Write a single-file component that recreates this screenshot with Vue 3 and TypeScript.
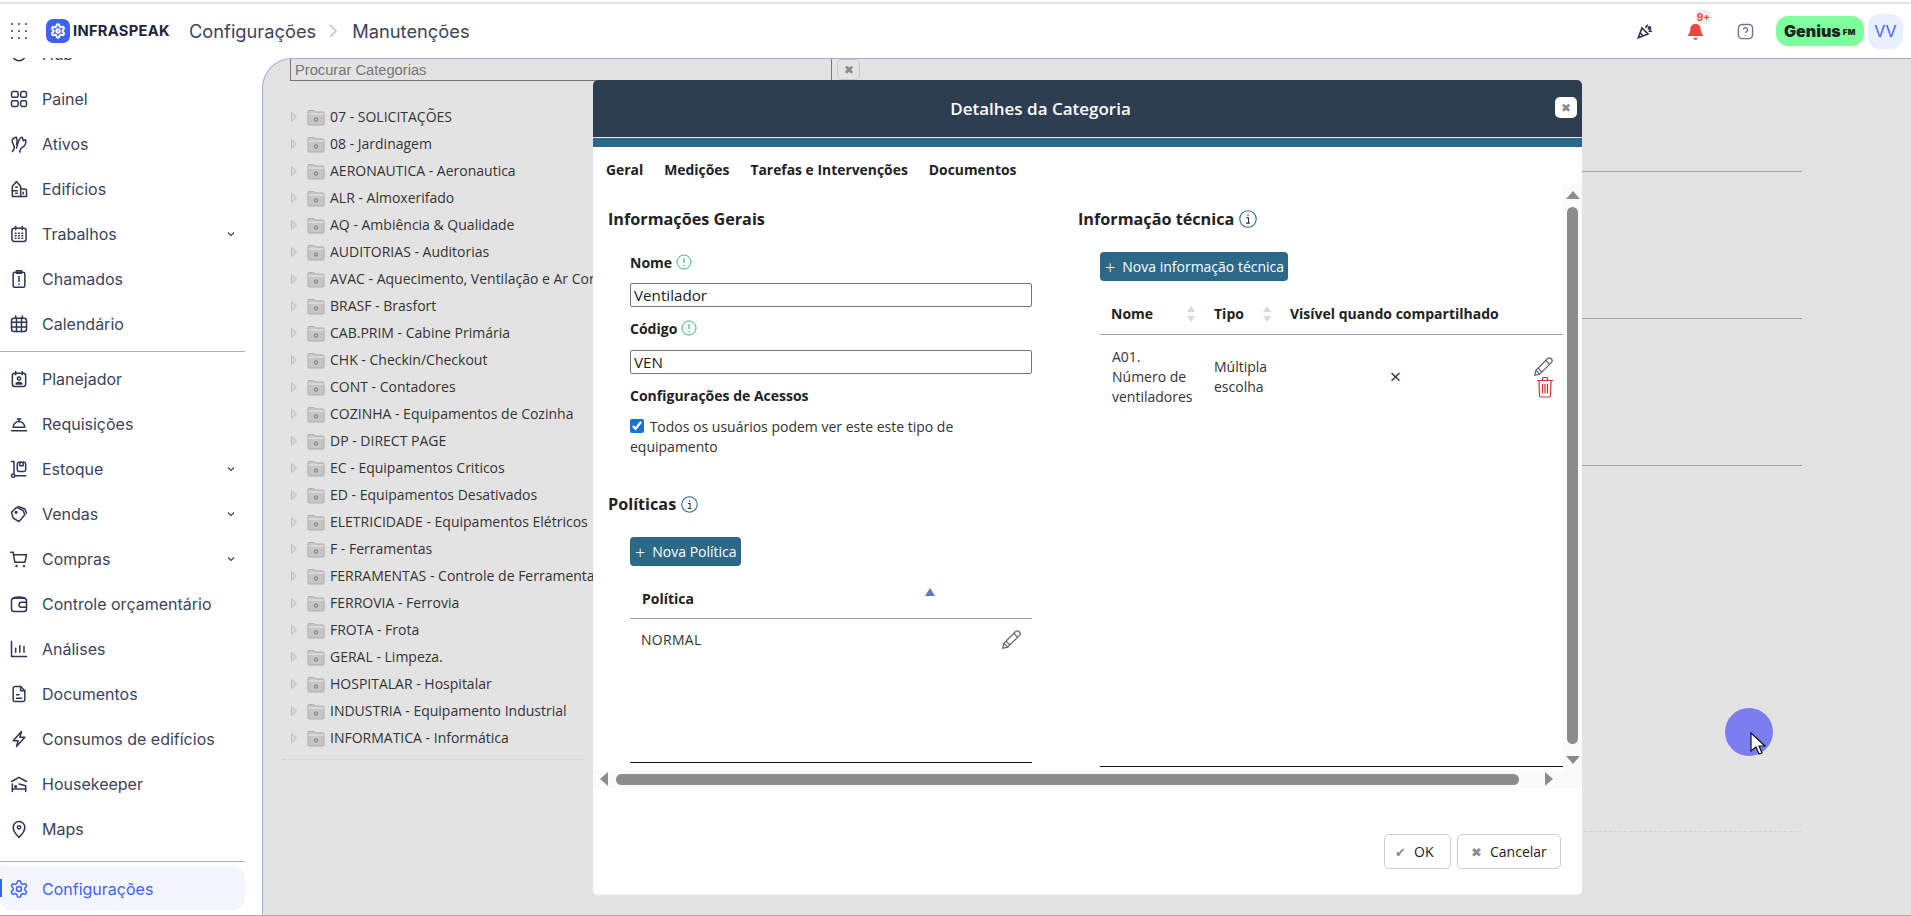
<script setup lang="ts">
const c = (x: number, y: number, r: number) => `M${x - r} ${y}a${r} ${r} 0 1 0 ${2 * r} 0a${r} ${r} 0 1 0 ${-2 * r} 0z`
const r = (x: number, y: number, w: number, h: number, q: number) =>
  `M${x + q} ${y}h${w - 2 * q}a${q} ${q} 0 0 1 ${q} ${q}v${h - 2 * q}a${q} ${q} 0 0 1 ${-q} ${q}h${-(w - 2 * q)}a${q} ${q} 0 0 1 ${-q} ${-q}v${-(h - 2 * q)}a${q} ${q} 0 0 1 ${q} ${-q}z`

interface NavItem { label: string; icon: string[]; caret?: boolean }

const gear = 'M12.22 2h-.44a2 2 0 0 0-2 2v.18a2 2 0 0 1-1 1.73l-.43.25a2 2 0 0 1-2 0l-.15-.08a2 2 0 0 0-2.73.73l-.22.38a2 2 0 0 0 .73 2.73l.15.1a2 2 0 0 1 1 1.72v.51a2 2 0 0 1-1 1.74l-.15.09a2 2 0 0 0-.73 2.73l.22.38a2 2 0 0 0 2.73.73l.15-.08a2 2 0 0 1 2 0l.43.25a2 2 0 0 1 1 1.73V20a2 2 0 0 0 2 2h.44a2 2 0 0 0 2-2v-.18a2 2 0 0 1 1-1.73l.43-.25a2 2 0 0 1 2 0l.15.08a2 2 0 0 0 2.73-.73l.22-.39a2 2 0 0 0-.73-2.73l-.15-.08a2 2 0 0 1-1-1.74v-.5a2 2 0 0 1 1-1.74l.15-.09a2 2 0 0 0 .73-2.73l-.22-.38a2 2 0 0 0-2.73-.73l-.15.08a2 2 0 0 1-2 0l-.43-.25a2 2 0 0 1-1-1.73V4a2 2 0 0 0-2-2z'

const groupA: NavItem[] = [
  { label: 'Hub', icon: [c(12, 12, 8)] },
  { label: 'Painel', icon: [r(3, 3, 8, 7, 2), r(14, 3, 7, 7, 2), r(3, 14, 8, 7, 2), r(14, 14, 7, 7, 2)] },
  { label: 'Ativos', icon: ['M4 21c2-2 3-4 2-7-1-2-3-4-2-7 1-2 3-3 5-3 1 3 1 6 0 9', 'M9 17c1-2 1-4 2-7 1-3 3-6 5-6l1 4 3-1c1 4-1 8-4 9-2 1-3 3-3 6'] },
  { label: 'Edifícios', icon: ['M4 21V9l5-6 5 6v12z', 'M14 12h5a2 2 0 0 1 2 2v7h-7', 'M4 14h6', 'M8 10h2', 'M8 17h2', 'M17 16v2'] },
  { label: 'Trabalhos', icon: [r(3.5, 5, 17, 16, 3), 'M8 3v4', 'M16 3v4', 'M7.5 11h1', 'M11.5 11h1', 'M15.5 11h1', 'M7.5 14h1', 'M11.5 14h1', 'M15.5 14h1', 'M7.5 17h1', 'M11.5 17h1', 'M15.5 17h1'], caret: true },
  { label: 'Chamados', icon: [r(5, 4, 14, 18, 2), 'M9 2h6v3H9z', 'M12 9v6', 'M12 18v.5'] },
  { label: 'Calendário', icon: [r(3, 5, 18, 16, 3), 'M3 10h18', 'M3 15.5h18', 'M9 5v16', 'M15 5v16', 'M8 2.5V5', 'M16 2.5V5'] },
]
const groupB: NavItem[] = [
  { label: 'Planejador', icon: [r(4, 5, 16, 16, 3), 'M8 3v4', 'M16 3v4', c(12, 11.5, 2), 'M8.5 18c.5-2.4 6.500-2.400 7 0z'] },
  { label: 'Requisições', icon: ['M5 16a7 7 0 0 1 14 0z', 'M12 9V6', 'M10 6h4', 'M3 20h18'] },
  { label: 'Estoque', icon: ['M3 3h3v14', c(5, 20, 2), 'M8 20h12', r(10, 4, 10, 11, 2), 'M13 4v4h4V4'], caret: true },
  { label: 'Vendas', icon: ['M3 10l6-6 8 4 2 5-7 8-7-4z', c(8.5, 10, 1), 'M11 3l8 3 2 5'], caret: true },
  { label: 'Compras', icon: ['M2 4h3l2 12h12l2-9H6', c(9, 20.500, .6), c(18, 20.500, .6)], caret: true },
  { label: 'Controle orçamentário', icon: [r(3, 5, 18, 16, 3), 'M5 5c1-2 11-2 14 0', 'M21 10h-6a3 3 0 0 0 0 6h6'] },
  { label: 'Análises', icon: ['M3 3v18h18', 'M8 16v-5', 'M13 16V8', 'M18 16V9'] },
  { label: 'Documentos', icon: ['M5 5a2 2 0 0 1 2-2h7l5 5v11a2 2 0 0 1-2 2H7a2 2 0 0 1-2-2z', 'M14 3v5h5', 'M9 13h3', 'M9 17h6'] },
  { label: 'Consumos de edifícios', icon: ['M15 3L5 14h6l-2 7 10-11h-6z'] },
  { label: 'Housekeeper', icon: ['M3 9l9-5 9 5', 'M4 21v-9', 'M4 18h16v3', 'M20 18v-4l-8-2', c(8, 15, 1)] },
  { label: 'Maps', icon: ['M12 22s7-6.500 7-12a7 7 0 0 0-14 0c0 5.500 7 12 7 12z', c(12, 10, 2)] },
]

const categories = [
  '07 - SOLICITAÇÕES', '08 - Jardinagem', 'AERONAUTICA - Aeronautica', 'ALR - Almoxerifado',
  'AQ - Ambiência & Qualidade', 'AUDITORIAS - Auditorias', 'AVAC - Aquecimento, Ventilação e Ar Condicionado',
  'BRASF - Brasfort', 'CAB.PRIM - Cabine Primária', 'CHK - Checkin/Checkout', 'CONT - Contadores',
  'COZINHA - Equipamentos de Cozinha', 'DP - DIRECT PAGE', 'EC - Equipamentos Criticos',
  'ED - Equipamentos Desativados', 'ELETRICIDADE - Equipamentos Elétricos', 'F - Ferramentas',
  'FERRAMENTAS - Controle de Ferramentas', 'FERROVIA - Ferrovia', 'FROTA - Frota', 'GERAL - Limpeza.',
  'HOSPITALAR - Hospitalar', 'INDUSTRIA - Equipamento Industrial', 'INFORMATICA - Informática',
]
const tabs = ['Geral', 'Medições', 'Tarefas e Intervenções', 'Documentos']
const pencil = ['M2.500 17.500L3.500 13 14 2.500c1-1 2.500-1 3.500 0s1 2.500 0 3.500L7 16.500z', 'M3.500 13L7 16.500', 'M12.500 4L16 7.500', 'M5.500 11L9 14.500']
</script>

<template>
  <div class="app">
    <div class="strip"></div>
    <header class="top">
      <svg class="dots" viewBox="0 0 16 16" width="16" height="16">
        <g fill="#3a4160">
          <circle v-for="p in [1,8,15].flatMap(x => [1,8,15].map(y => [x,y]))" :key="p.join()" :cx="p[0]" :cy="p[1]" r="1" />
        </g>
      </svg>
      <div class="logo">
        <svg viewBox="0 0 24 24" width="16" height="16" fill="none" stroke="#fff" stroke-width="3">
          <path :d="gear" /><circle cx="12" cy="12" r="2.500" />
        </svg>
      </div>
      <span class="brand">INFRASPEAK</span>
      <nav class="crumbs">
        <span>Configurações</span>
        <svg viewBox="0 0 10 16" width="10" height="16" fill="none" stroke="#b9bcc6" stroke-width="1.400"><path d="M2 2l6 6-6 6" /></svg>
        <span>Manutenções</span>
      </nav>
      <div class="top-right">
        <svg class="party" viewBox="0 0 24 24" width="18" height="18" fill="none" stroke="#2f3650" stroke-width="2.200">
          <path d="M3 21L8 8l8 8z" /><path d="M6 15l3 3" /><path d="M13 8c0-2 1-3 3-4" /><circle cx="18" cy="8" r="1.500" /><path d="M17 13c1-1 3-1 4 0" />
        </svg>
        <div class="bell">
          <svg viewBox="0 0 24 24" width="21" height="21" fill="#f04545">
            <path d="M12 3a6 6 0 0 0-6 6c0 5-3 7-3 8h18c0-1-3-3-3-8a6 6 0 0 0-6-6z" /><path d="M9.500 19h5a2.500 2.500 0 0 1-5 0z" />
          </svg>
          <span class="badge">9+</span>
        </div>
        <svg class="help" viewBox="0 0 18 18" width="17" height="17" fill="none" stroke="#6c7694" stroke-width="1.500">
          <rect x="1.500" y="1.500" width="15" height="15" rx="4" />
          <path d="M6.800 7a2.200 2.200 0 1 1 3.300 2c-.8.5-1.100.9-1.100 1.700" /><path d="M9 12.600v.8" />
        </svg>
        <div class="genius">Genius<small>FM</small></div>
        <div class="avatar">VV</div>
      </div>
    </header>

    <div class="body">
      <aside class="side">
        <div class="nav">
          <a v-for="it in groupA" :key="it.label" class="item">
            <svg viewBox="0 0 24 24" width="20" height="20" fill="none" stroke="#2f3650" stroke-width="1.800" stroke-linecap="round" stroke-linejoin="round"><path v-for="d in it.icon" :key="d" :d="d" /></svg>
            <span>{{ it.label }}</span>
            <svg v-if="it.caret" class="caret" viewBox="0 0 8 6" width="8" height="6" fill="none" stroke="#3a4160" stroke-width="1.200"><path d="M1 1.500l3 3 3-3" /></svg>
          </a>
          <hr />
          <a v-for="it in groupB" :key="it.label" class="item">
            <svg viewBox="0 0 24 24" width="20" height="20" fill="none" stroke="#2f3650" stroke-width="1.800" stroke-linecap="round" stroke-linejoin="round"><path v-for="d in it.icon" :key="d" :d="d" /></svg>
            <span>{{ it.label }}</span>
            <svg v-if="it.caret" class="caret" viewBox="0 0 8 6" width="8" height="6" fill="none" stroke="#3a4160" stroke-width="1.200"><path d="M1 1.500l3 3 3-3" /></svg>
          </a>
          <hr class="hr2" />
          <a class="item active">
            <svg viewBox="0 0 24 24" width="20" height="20" fill="none" stroke="#3f62f2" stroke-width="1.800"><path :d="gear" /><circle cx="12" cy="12" r="3" /></svg>
            <span>Configurações</span>
          </a>
        </div>
      </aside>

      <main class="main">
        <section class="tree-col">
          <div class="search">
            <input class="search-input" placeholder="Procurar Categorias" />
            <button class="clear">✖</button>
          </div>
          <ul class="tree">
            <li v-for="cat in categories" :key="cat">
              <svg class="arrow" viewBox="0 0 6 10" width="6" height="10"><path d="M.5.500l5 4.500-5 4.500z" fill="#d9d9d9" stroke="#bcbcbc" /></svg>
              <svg class="folder" viewBox="0 0 18 18" width="18" height="18">
                <path d="M1 3.500A1 1 0 0 1 2 2.500h5l1.500 1.500H16a1 1 0 0 1 1 1V16a1 1 0 0 1-1 1H2a1 1 0 0 1-1-1z" fill="#c6c6c6" stroke="#adadad" />
                <path d="M1.500 6h15" stroke="#ececec" />
                <circle cx="9" cy="11.500" r="2.200" fill="#8f8f8f" /><circle cx="9" cy="11.500" r=".8" fill="#d0d0d0" />
              </svg>
              <span>{{ cat }}</span>
            </li>
          </ul>
          <div class="dotted"></div>
        </section>
        <section class="rules">
          <div class="rule first"></div>
          <div class="rule"></div>
          <div class="rule"></div>
          <div class="dashed"></div>
        </section>
      </main>
    </div>

    <div class="modal">
      <div class="m-head">
        <span>Detalhes da Categoria</span>
        <button class="m-close">✖</button>
      </div>
      <div class="m-bar"></div>
      <div class="m-tabs">
        <a v-for="t in tabs" :key="t">{{ t }}</a>
      </div>
      <div class="m-scroll">
        <div class="m-content">
          <div class="col-left">
            <h3>Informações Gerais</h3>
            <div class="indent">
              <label class="lab">Nome <svg class="ok" viewBox="0 0 16 16" width="16" height="16"><circle cx="8" cy="8" r="7" fill="none" stroke="#3cb878" /><path d="M8 4v5M8 11v1.300" stroke="#3cb878" stroke-width="1.200" /></svg></label>
              <input class="txt" value="Ventilador" />
              <label class="lab lab-code">Código <svg class="ok" viewBox="0 0 16 16" width="16" height="16"><circle cx="8" cy="8" r="7" fill="none" stroke="#3cb878" /><path d="M8 4v5M8 11v1.300" stroke="#3cb878" stroke-width="1.200" /></svg></label>
              <input class="txt" value="VEN" />
              <label class="lab lab-access">Configurações de Acessos</label>
              <p class="chk"><input type="checkbox" checked /> Todos os usuários podem ver este este tipo de equipamento</p>
            </div>
            <h3 class="pol">Políticas <svg class="inf" viewBox="0 0 16 16" width="17" height="17"><circle cx="8" cy="8" r="7.300" fill="none" stroke="#2c6888" /><path d="M6.500 7h2v4.500M6.300 11.700h3.400M8 4v1.300" fill="none" stroke="#333" /></svg></h3>
            <div class="indent">
              <button class="prim"><span class="plus">+</span>Nova Política</button>
              <div class="pol-head"><span>Política</span><svg viewBox="0 0 10 8" width="10" height="8"><path d="M5 0l5 8H0z" fill="#6a73cc" /></svg></div>
              <div class="pol-body">
                <span class="norm">NORMAL</span>
                <svg viewBox="0 0 20 20" width="22" height="22" fill="none" stroke="#666" stroke-width="1.100"><path v-for="d in pencil" :key="d" :d="d" /></svg>
              </div>
            </div>
          </div>
          <div class="col-right">
            <h3>Informação técnica <svg class="inf" viewBox="0 0 16 16" width="18" height="18"><circle cx="8" cy="8" r="7.300" fill="none" stroke="#2c6888" /><path d="M6.500 7h2v4.500M6.300 11.700h3.400M8 4v1.300" fill="none" stroke="#333" /></svg></h3>
            <div class="tech">
              <button class="prim"><span class="plus">+</span>Nova informação técnica</button>
              <div class="t-grid t-head">
                <span class="sortable">Nome<svg viewBox="0 0 10 18" width="10" height="18"><path d="M5 1l4 6H1zM5 17l4-6H1z" fill="#d8d8d8" /></svg></span>
                <span class="sortable">Tipo<svg viewBox="0 0 10 18" width="10" height="18"><path d="M5 1l4 6H1zM5 17l4-6H1z" fill="#d8d8d8" /></svg></span>
                <span class="nowrap">Visível quando compartilhado</span>
                <span></span>
              </div>
              <div class="t-body">
                <div class="t-grid t-row">
                  <span>A01.<br />Número de ventiladores</span>
                  <span>Múltipla escolha</span>
                  <span class="center">×</span>
                  <span class="acts">
                    <svg viewBox="0 0 20 20" width="22" height="22" fill="none" stroke="#666" stroke-width="1.100"><path v-for="d in pencil" :key="d" :d="d" /></svg>
                    <svg class="trash" viewBox="0 0 18 22" width="18" height="22" fill="none" stroke="#d32f3a" stroke-width="1.200"><path d="M1 4.500h16M3 4.500l.5 15a1.500 1.500 0 0 0 1.500 1.500h8a1.500 1.500 0 0 0 1.500-1.500l.5-15M6.500 4.500V2.500a1 1 0 0 1 1-1h3a1 1 0 0 1 1 1v2M6.500 8v9.500M9 8v9.500M11.500 8v9.500" /></svg>
                  </span>
                </div>
              </div>
            </div>
          </div>
        </div>
        <div class="vbar">
          <svg viewBox="0 0 14 10" width="14" height="10"><path d="M7 1l7 8H0z" fill="#8c8c8c" /></svg>
          <div class="v-thumb"></div>
          <svg viewBox="0 0 14 10" width="14" height="10"><path d="M7 9l7-8H0z" fill="#8c8c8c" /></svg>
        </div>
        <div class="hbar">
          <svg viewBox="0 0 10 14" width="10" height="14"><path d="M1 7l8-7v14z" fill="#8c8c8c" /></svg>
          <div class="h-thumb"></div>
          <svg viewBox="0 0 10 14" width="10" height="14"><path d="M9 7L1 0v14z" fill="#8c8c8c" /></svg>
        </div>
      </div>
      <div class="m-foot">
        <button class="sec ok-btn"><i class="g">✔</i>OK</button>
        <button class="sec cancel-btn"><i class="g">✖</i>Cancelar</button>
      </div>
    </div>

    <div class="pointer">
      <svg viewBox="0 0 16 24" width="16" height="24"><path d="M1 1v18l5-4 3 7 3-1-3-7h6z" fill="#fff" stroke="#111" stroke-width="1.200" /></svg>
    </div>
  </div>
</template>

<style>
html, body { margin: 0; height: 100%; overflow: hidden; background: #fff; }
</style>

<style scoped>
.app { height: 916px; display: flex; flex-direction: column; position: relative; font-family: Inter, sans-serif; overflow: hidden; background: #fff; }
.strip { height: 2px; border-bottom: 2px solid #e3e3e3; }
.top { height: 54px; flex: none; display: flex; align-items: center; padding-left: 11px; background: #fff; position: relative; z-index: 2; }
.dots { margin-right: 19px; }
.logo { width: 24px; height: 24px; border-radius: 7px; background: #3f62f2; display: flex; align-items: center; justify-content: center; }
.brand { margin-left: 3px; font-weight: 700; font-size: 14.7px; letter-spacing: .3px; color: #20253a; width: 116px; }
.crumbs { display: flex; align-items: center; gap: 12px; font-size: 18.300px; color: #3d4458; }
.crumbs svg { margin-right: 2px; }
.top-right { margin-left: auto; display: flex; align-items: center; padding-right: 8px; }
.party { margin-right: 31px; }
.bell { position: relative; width: 21px; height: 21px; margin-right: 31px; }
.badge { position: absolute; left: 10px; top: -11px; width: 17px; height: 14px; border-radius: 8px; background: #eee; color: #f04545; font-size: 10px; font-weight: 700; text-align: center; line-height: 14px; }
.help { margin-right: 22px; }
.genius { width: 88px; height: 30px; border-radius: 12px; background: #80ff9f; color: #222; font-weight: 900; font-size: 16px; line-height: 30px; text-align: center; margin-right: 4px; font-family: Inter, sans-serif; }
.genius small { font-size: 8px; letter-spacing: .5px; vertical-align: 2px; margin-left: 2px; }
.avatar { width: 35px; height: 35px; border-radius: 12px; background: #e8effd; color: #3f62f2; font-size: 16px; line-height: 35px; text-align: center; }

.body { flex: 1; min-height: 0; display: flex; border-bottom: 1px solid #a9a9a9; }
.side { width: 262px; flex: none; overflow: hidden; background: #fff; }
.nav { margin-top: -27px; width: 245px; }
.item { height: 45px; display: flex; align-items: center; padding-left: 9px; font-size: 16px; color: #3d4458; box-sizing: border-box; }
.item > span { margin-left: 13px; }
.caret { margin-left: auto; margin-right: 10px; }
hr { height: 1px; border: 0; background: #a8aed0; margin: 5px 0 4px; }
.hr2 { margin: 10px 0 4px; }
.active { color: #3f62f2; background: #f3f5ff; border-radius: 0 14px 14px 14px; position: relative; height: 45px; }
.active::before { content: ""; position: absolute; left: 0; top: 13px; height: 18px; width: 2px; background: #3f62f2; }

.main { flex: 1; display: flex; background: #e3e3e3; border-top: 1px solid #a5acd0; border-left: 1px solid #a5acd0; border-top-left-radius: 30px; font-family: "Open Sans", sans-serif; }
.tree-col { width: 330px; flex: none; position: relative; }
.search { display: flex; align-items: flex-start; margin-left: 27px; width: 570px; }
.search-input { width: 542px; height: 22px; box-sizing: border-box; border: 0; border-left: 1px solid #767676; border-bottom: 1px solid #767676; border-right: 1px solid #767676; background: transparent; font: 14.7px "Liberation Sans", sans-serif; padding: 0 4px; flex: none; border-radius: 0; }
.search-input::placeholder { color: #757575; }
.clear { margin-left: 5px; width: 23px; height: 21px; border: 1px solid #c8c8c8; border-radius: 5px; background: #e3e3e3; color: #8a8a8a; font-size: 12px; padding: 0; }
.tree { list-style: none; margin: 22px 0 0; padding: 0 0 0 28px; width: 600px; box-sizing: border-box; }
.tree li { height: 27px; display: flex; align-items: center; font-size: 14px; color: #333; white-space: nowrap; }
.arrow { margin-right: 10px; }
.folder { margin-right: 5px; }
.dotted { margin: 8px 0 0 20px; border-top: 1px dotted #cfcfcf; width: 300px; }
.rules { flex: 1; margin-right: 109px; }
.rule { height: 147px; border-bottom: 1px solid #a3a3a3; box-sizing: border-box; }
.rule.first { height: 113px; }
.dashed { margin-top: 365px; border-top: 1px dashed #d4d4d4; }

.modal { position: absolute; left: 593px; top: 80px; width: 989px; height: 815px; background: #fff; border-radius: 5px; display: flex; flex-direction: column; overflow: hidden; z-index: 3; font-family: "Open Sans", sans-serif; color: #222; }
.m-head { height: 57px; flex: none; background: #2c3e50; color: #fff; font-weight: 600; font-size: 17px; display: flex; align-items: center; justify-content: center; padding-right: 94px; position: relative; box-sizing: border-box; }
.m-close { position: absolute; right: 5px; top: 17px; width: 22px; height: 21px; border: 0; background: #fff; border-radius: 5px; color: #8a8a8a; font-size: 12px; padding: 0; }
.m-bar { height: 9px; flex: none; border-top: 1px solid #e8eef2; background: #2c6888; }
.m-tabs { height: 37px; flex: none; display: flex; align-items: center; padding-left: 13px; gap: 21px; font-size: 13.900px; font-weight: 700; color: #222; box-sizing: border-box; padding-top: 10px; padding-bottom: 2px; }
.m-scroll { height: 604px; flex: none; display: grid; grid-template-columns: 970px 19px; grid-template-rows: 586px 18px; }
.m-content { display: flex; overflow: hidden; }
.col-left { width: 485px; flex: none; padding-left: 15px; box-sizing: border-box; }
.col-right { flex: 1; }
h3 { margin: 24px 0 22px; height: 22px; font-size: 16.200px; line-height: 22px; font-weight: 700; color: #222; display: flex; align-items: center; gap: 5px; }
h3.pol { margin-top: 36px; }
.indent { margin-left: 22px; width: 402px; }
.lab { display: flex; align-items: center; gap: 4px; height: 20px; font-size: 14px; font-weight: 700; margin: 0 0 11px; }
.lab-code { margin-bottom: 12px; }
.lab-access { margin-bottom: 12px; }
.txt { display: block; width: 100%; height: 24px; box-sizing: border-box; border: 1px solid #767676; border-radius: 2px; padding: 0 3px; font: 15.200px "Open Sans", sans-serif; color: #222; margin-bottom: 11px; }
.chk { margin: 0; font-size: 14px; line-height: 20px; color: #333; }
.chk input { margin: 0 2px 0 0; width: 14px; height: 14px; vertical-align: -1px; accent-color: #1a6fd8; }
.prim { height: 29px; border: 0; border-radius: 4px; background: #2c6888; color: #fff; font: 14px "Open Sans", sans-serif; padding: 0 4px 0 5px; display: flex; align-items: center; white-space: nowrap; }
.plus { font-size: 18px; line-height: 20px; margin-right: 7px; font-weight: 300; }
.pol-head { height: 53px; box-sizing: border-box; border-bottom: 1px solid #a3a3a3; display: flex; align-items: center; padding: 12px 0 0 12px; font-size: 14px; font-weight: 700; position: relative; }
.pol-head svg { position: absolute; left: 295px; top: 22px; }
.pol-body { height: 144px; box-sizing: border-box; border-bottom: 1px solid #111; display: flex; align-items: flex-start; justify-content: space-between; padding: 10px 10px 0 11px; font-size: 14px; line-height: 20px; color: #333; }
.norm { letter-spacing: .3px; margin-top: 1px; }
.tech { margin-left: 22px; width: 463px; }
.t-grid { display: grid; grid-template-columns: 102px 76px 230px 55px; }
.t-grid > span { padding-left: 12px; }
.t-head { height: 54px; box-sizing: border-box; border-bottom: 1px solid #a3a3a3; font-size: 14px; font-weight: 700; align-items: center; padding-top: 12px; }
.t-head > span:first-child { padding-left: 11px; }
.sortable { display: flex; align-items: center; justify-content: space-between; padding-right: 6px; }
.nowrap { white-space: nowrap; }
.t-body { height: 432px; box-sizing: border-box; border-bottom: 1px solid #111; padding-top: 12px; }
.t-row { font-size: 14px; line-height: 20px; color: #333; align-items: center; }
.center { text-align: center; font-size: 20px; padding-right: 7px; }
.acts { display: flex; flex-direction: column; align-items: flex-end; padding-right: 9px; }
.trash { margin-top: -2px; }
.vbar { background: #fafafa; display: flex; flex-direction: column; align-items: center; padding: 6px 0 0; grid-row: 1 / 3; grid-column: 2; margin-bottom: 0; }
.v-thumb { width: 11px; height: 537px; border-radius: 6px; background: #8c8c8c; margin: 7px 0 11px; }
.hbar { background: #fafafa; grid-row: 2; grid-column: 1; display: flex; align-items: center; padding-left: 6px; }
.h-thumb { width: 903px; height: 11px; border-radius: 6px; background: #8c8c8c; margin: 0 25px 0 7px; }
.m-foot { flex: 1; display: flex; justify-content: flex-end; align-items: flex-end; gap: 6px; padding: 0 21px 26px 0; }
.sec { height: 35px; border: 1px solid #ccc; border-radius: 5px; background: #fff; font: 14px "Open Sans", sans-serif; color: #222; display: flex; align-items: center; justify-content: flex-start; padding: 0; box-sizing: border-box; }
.ok-btn { width: 67px; padding-left: 10px; }
.cancel-btn { width: 104px; padding-left: 13px; }
.g { font-style: normal; color: #8a8a8a; font-size: 13px; margin-right: 8px; }

.pointer { position: absolute; left: 1725px; top: 708px; width: 48px; height: 48px; border-radius: 50%; background: #7a7eef; z-index: 4; }
.pointer svg { position: absolute; left: 25px; top: 24px; }
</style>
